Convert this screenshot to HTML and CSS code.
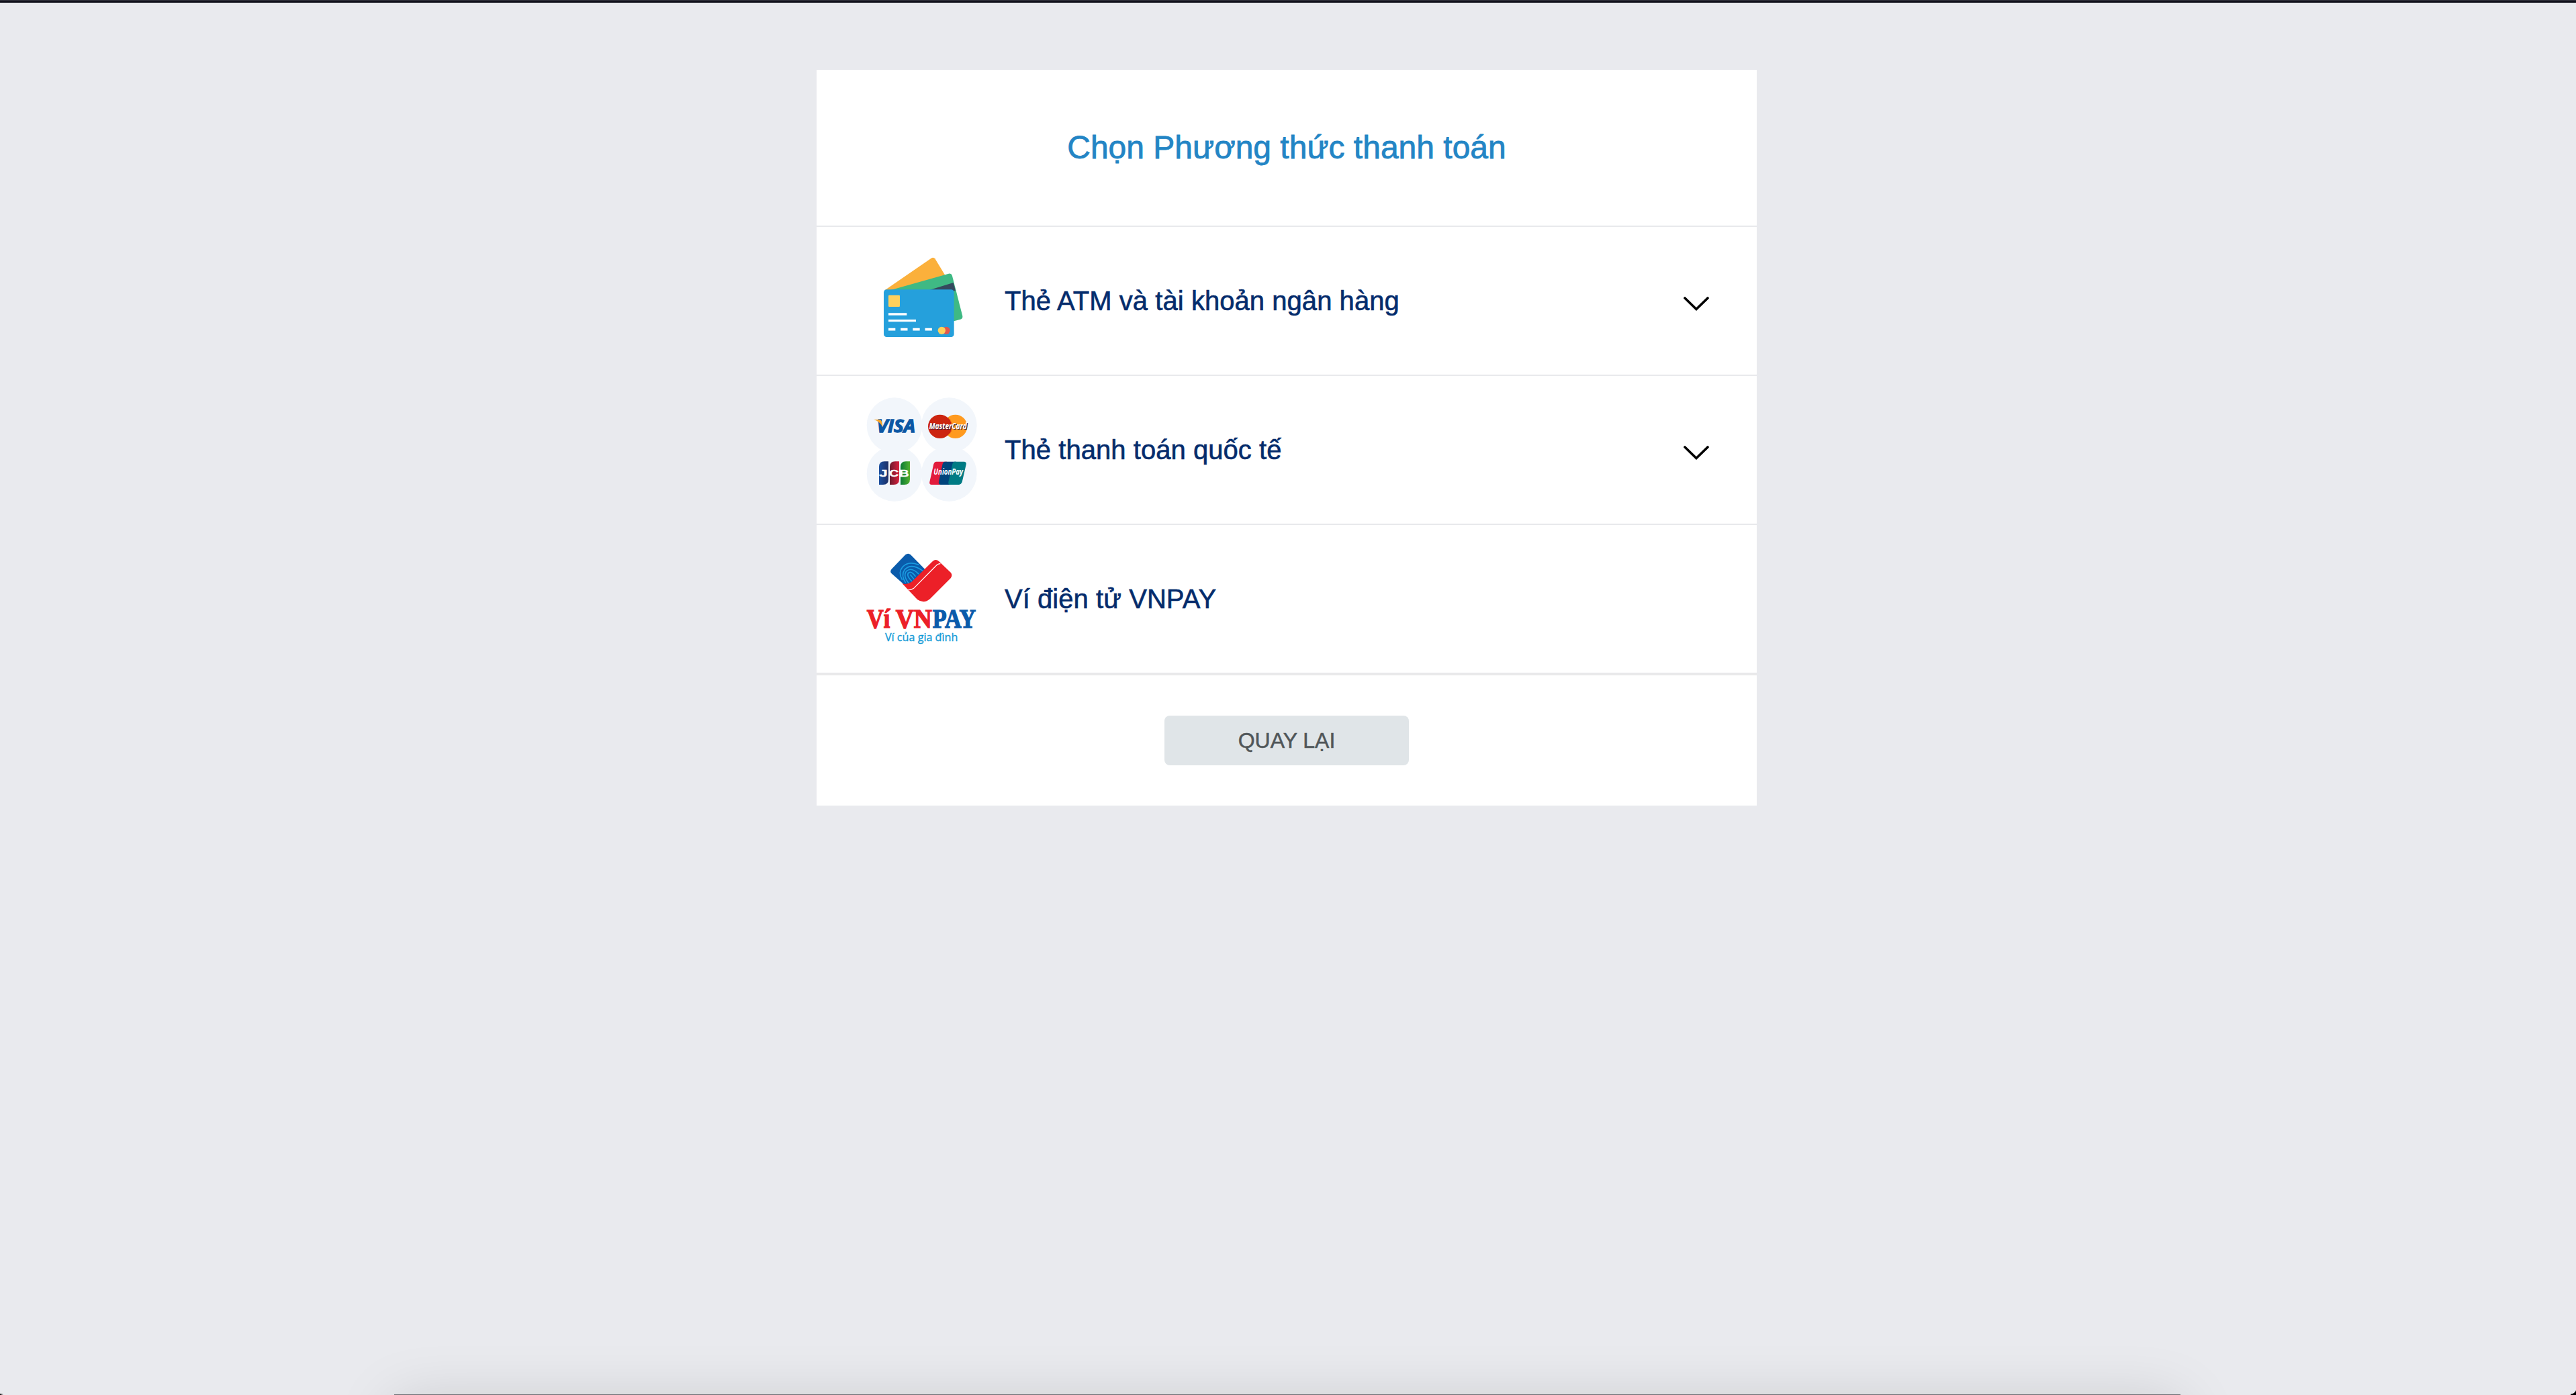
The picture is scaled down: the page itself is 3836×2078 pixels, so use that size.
FILE: index.html
```
<!DOCTYPE html>
<html lang="vi">
<head>
  <meta charset="UTF-8">
  <meta name="viewport" content="width=device-width, initial-scale=1.0">
  <title>Chọn Phương thức thanh toán</title>
  <link rel="stylesheet" href="styles.css">
</head>
<body>

<div class="topbar"></div>

<main class="payment">
  <h1>Chọn Phương thức thanh toán</h1>

  <div class="method">
    <svg class="method-icon" viewBox="0 -6 660 540">
      <path d="M144 216 L350 74 Q360 68 367 76 L412 150 L300 216Z" fill="#fbb03b"/>
      <path d="M170 216 L428 143 Q440 141 444 153 L490 332 Q492 343 481 347 L440 358 L300 300Z" fill="#3fb984"/>
      <path d="M335 218 L449 183 L459 220Z" fill="#35495e"/>
      <rect x="138" y="214" width="314" height="212" rx="13" fill="#25a0dc"/>
      <rect x="159" y="239" width="51" height="52" rx="4" fill="#ffd05b"/>
      <path d="M159 324H241M159 353H282" stroke="#fff" stroke-width="10"/>
      <path d="M159 392H354" stroke="#fff" stroke-width="11" stroke-dasharray="31 23.5"/>
      <circle cx="417" cy="397" r="17" fill="#e2574c"/>
      <circle cx="397" cy="397" r="17" fill="#ffd05b"/>
    </svg>
    <span class="method-name">Thẻ ATM và tài khoản ngân hàng</span>
    <svg class="chevron" viewBox="0 0 40 22"><path d="M3 3L20 19.500L37 3"/></svg>
  </div>

  <div class="method">
    <svg class="method-icon" viewBox="0 0 660 540">
      <defs>
        <linearGradient id="jcb-blue"><stop offset="0" stop-color="#1b4f9f"/><stop offset="1" stop-color="#1c2f66"/></linearGradient>
        <linearGradient id="jcb-red"><stop offset="0" stop-color="#6d1a2d"/><stop offset="1" stop-color="#d81f3c"/></linearGradient>
        <linearGradient id="jcb-green"><stop offset="0" stop-color="#0a7a35"/><stop offset="1" stop-color="#52b030"/></linearGradient>
      </defs>
      <g fill="#f2f6fb">
        <circle cx="186" cy="161" r="124"/>
        <circle cx="430" cy="161" r="124"/>
        <circle cx="186" cy="377" r="124"/>
        <circle cx="430" cy="377" r="124"/>
      </g>

      <text class="visa" x="107" y="192" textLength="172" lengthAdjust="spacingAndGlyphs">VISA</text>
      <path d="M93 135H120Q127 136 129 144L133 168Q119 142 93 135Z" fill="#f7a428"/>

      <circle cx="458" cy="166" r="53" fill="#ff9a1f"/>
      <circle cx="389" cy="166" r="53" fill="#cc2410"/>
      <path d="M414 138H436M414 147H440M414 186H440M416 194H436" stroke="#cc2410" stroke-width="4"/>
      <text class="mastercard mastercard-shade" x="345" y="181" textLength="168" lengthAdjust="spacingAndGlyphs">MasterCard</text>
      <text class="mastercard" x="341" y="178" textLength="168" lengthAdjust="spacingAndGlyphs">MasterCard</text>

      <path d="M117 346Q117 322 141 322H159V402Q159 426 135 426H117Z" fill="url(#jcb-blue)"/>
      <path d="M165 346Q165 322 189 322H207V402Q207 426 183 426H165Z" fill="url(#jcb-red)"/>
      <path d="M213 346Q213 322 237 322H255V402Q255 426 231 426H213Z" fill="url(#jcb-green)"/>
      <text class="jcb" x="117" y="391" textLength="38" lengthAdjust="spacingAndGlyphs">J</text>
      <text class="jcb" x="162" y="391" textLength="43" lengthAdjust="spacingAndGlyphs">C</text>
      <text class="jcb" x="208" y="391" textLength="43" lengthAdjust="spacingAndGlyphs">B</text>

      <path d="M373 323H420L392 426H352Q340 425 343 413L361 334Q364 324 373 323Z" fill="#e21b3c"/>
      <path d="M410 323H462L434 426H392Q381 424 384 412L401 333Q403 324 410 323Z" fill="#00447c"/>
      <path d="M454 323H498Q509 325 506 336L488 414Q484 425 474 426H433Q425 424 427 414L445 333Q447 324 454 323Z" fill="#007b84"/>
      <text class="unionpay" x="361" y="382" textLength="131" lengthAdjust="spacingAndGlyphs">UnionPay</text>
    </svg>
    <span class="method-name">Thẻ thanh toán quốc tế</span>
    <svg class="chevron" viewBox="0 0 40 22"><path d="M3 3L20 19.500L37 3"/></svg>
  </div>

  <div class="method">
    <svg class="method-icon" viewBox="0 6 660 540">
      <path d="M235 79Q247 70 258 79L325 147L244 226L173 163Q164 154 173 143Z" fill="#0a5bab"/>
      <!-- fingerprint -->
      <g class="fingerprint">
        <path d="M220 190Q201 158 222 134Q248 105 294 124"/>
        <path d="M235 203Q214 170 231 146Q262 113 312 151"/>
        <path d="M250 207Q222 172 240 152Q262 133 293 164"/>
        <path d="M263 197Q236 170 250 159Q262 151 279 175"/>
        <path d="M273 188L257 169"/>
      </g>
      <path d="M220 207Q240 216 263 200L356 109Q370 96 384 108L437 158Q447 170 437 184L345 276Q318 300 288 279Z" fill="#ec2028"/>
      <path d="M247 234Q258 239 272 229L371 129Q379 119 391 119" fill="none" stroke="#fff" stroke-width="3.500"/>
      <text class="vnpay" x="62" y="404" textLength="104" lengthAdjust="spacingAndGlyphs">Ví</text>
      <text class="vnpay" x="191" y="404" textLength="162" lengthAdjust="spacingAndGlyphs">VN</text>
      <text class="vnpay vnpay-blue" x="356" y="404" textLength="194" lengthAdjust="spacingAndGlyphs">PAY</text>
      <text class="slogan" x="144" y="464" textLength="325" lengthAdjust="spacingAndGlyphs">Ví của gia đình</text>
    </svg>
    <span class="method-name">Ví điện tử VNPAY</span>
  </div>

  <div class="actions">
    <button type="button">QUAY LẠI</button>
  </div>
</main>

<div class="screen-edge">
  <div class="dock"></div>
  <div class="corner corner-left"></div>
  <div class="corner corner-right"></div>
</div>

</body>
</html>
```
FILE: styles.css
```
* {
  box-sizing: border-box;
}
body {
  margin: 0;
  height: 100vh;
  overflow: hidden;
  position: relative;
  background-color: #e9eaee;
  font-family: "Liberation Sans", Arial, sans-serif;
}
.topbar {
  height: 4px;
  background-color: #080913;
  border-top: 2px solid #2b2b35;
}
.payment {
  width: 1400px;
  margin: 100px 0 0 1216px;
  background-color: #fff;
}
h1 {
  margin: 0;
  height: 232px;
  line-height: 232px;
  text-align: center;
  font-size: 48px;
  font-weight: normal;
  color: #2385c5;
  -webkit-text-stroke: 0.8px #2385c5;
}
.method {
  display: flex;
  align-items: center;
  height: 222px;
  padding: 0 70px 0 54px;
  border-top: 2px solid #e8e9ec;
}
.method-icon {
  width: 220px;
  height: 180px;
}
.method-name {
  flex: 1;
  padding-left: 6px;
  font-size: 40px;
  letter-spacing: 0.05px;
  color: #052c6c;
  -webkit-text-stroke: 0.6px #052c6c;
}
.chevron {
  width: 40px;
  height: 22px;
  margin-top: 8px;
  fill: none;
  stroke: #000;
  stroke-width: 3.6px;
  stroke-linecap: round;
}
.actions {
  display: flex;
  justify-content: center;
  height: 198px;
  padding-top: 60px;
  border-top: 4px solid #e9e9ea;
}
button {
  width: 364px;
  height: 74px;
  border: none;
  border-radius: 8px;
  background-color: #e0e5e8;
  color: #505659;
  font-family: inherit;
  font-size: 32px;
  -webkit-text-stroke: 0.5px #505659;
  cursor: pointer;
}

/* logo lettering */
.visa {
  font: italic bold 80px "Open Sans", sans-serif;
  fill: #0b57a4;
  stroke: #0b57a4;
  stroke-width: 4px;
}
.mastercard {
  font: italic bold 37px "Open Sans", sans-serif;
  fill: #fff;
}
.mastercard-shade {
  fill: #3a2440;
}
.jcb {
  font: bold 46px "Liberation Sans", sans-serif;
  fill: #fff;
  stroke: #fff;
  stroke-width: 1px;
}
.unionpay {
  font: italic bold 36px "Open Sans", sans-serif;
  fill: #fff;
}
.vnpay {
  font: bold 120px "Liberation Serif", serif;
  fill: #ec2028;
  stroke: #ec2028;
  stroke-width: 4px;
}
.vnpay-blue {
  fill: #0a5bab;
  stroke: #0a5bab;
}
.slogan {
  font: 49px "Open Sans", sans-serif;
  fill: #149bd7;
  stroke: #149bd7;
  stroke-width: 1px;
}
.fingerprint {
  fill: none;
  stroke: #1b9be0;
  stroke-width: 5px;
  stroke-linecap: round;
}

/* screen edge */
.screen-edge {
  position: absolute;
  left: 0;
  right: 0;
  bottom: 0;
  height: 200px;
  overflow: hidden;
  pointer-events: none;
}
.dock {
  position: absolute;
  left: 587px;
  top: 199px;
  width: 2660px;
  height: 120px;
  border-top: 1px solid #6d6e73;
  box-shadow: 0 12px 90px rgba(0, 0, 0, 0.15);
}
.corner {
  position: absolute;
  bottom: 0;
}
.corner-left {
  left: 0;
  width: 5px;
  height: 2px;
  background: linear-gradient(to right, #000, transparent);
}
.corner-right {
  right: 0;
  width: 8px;
  height: 10px;
  background: radial-gradient(circle at 0 0, transparent 8px, #000 9px);
}
```
